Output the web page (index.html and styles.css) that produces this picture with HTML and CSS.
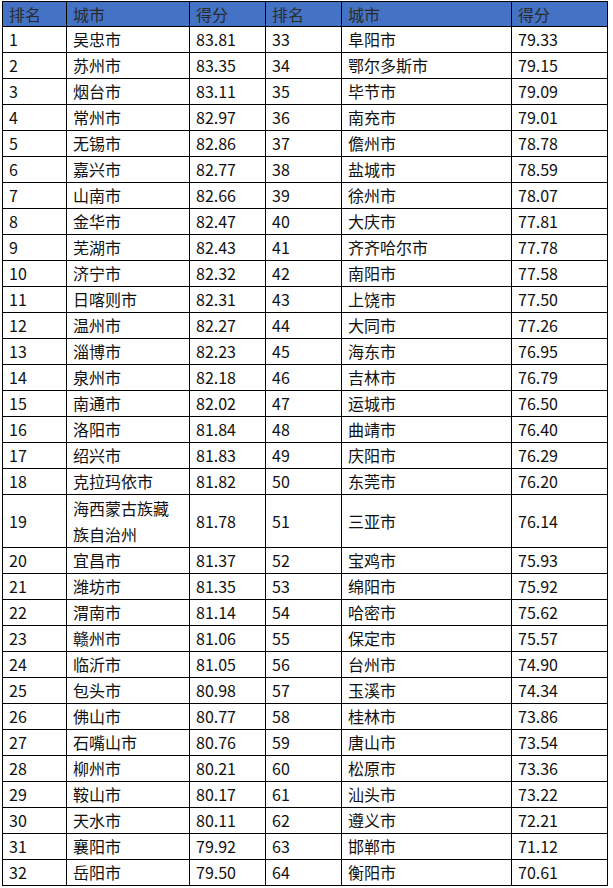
FILE: index.html
```html
<!DOCTYPE html>
<html lang="zh">
<head>
<meta charset="utf-8">
<title>城市排名</title>
<link rel="stylesheet" href="styles.css">
</head>
<body>
<table class="rank">
<colgroup>
<col class="c-rank"><col class="c-city"><col class="c-score">
<col class="c-rank2"><col class="c-city2"><col class="c-score2">
</colgroup>
<thead>
<tr><th>排名</th><th>城市</th><th>得分</th><th>排名</th><th>城市</th><th>得分</th></tr>
</thead>
<tbody>
<tr><td>1</td><td>吴忠市</td><td>83.81</td><td>33</td><td>阜阳市</td><td>79.33</td></tr>
<tr><td>2</td><td>苏州市</td><td>83.35</td><td>34</td><td>鄂尔多斯市</td><td>79.15</td></tr>
<tr><td>3</td><td>烟台市</td><td>83.11</td><td>35</td><td>毕节市</td><td>79.09</td></tr>
<tr><td>4</td><td>常州市</td><td>82.97</td><td>36</td><td>南充市</td><td>79.01</td></tr>
<tr><td>5</td><td>无锡市</td><td>82.86</td><td>37</td><td>儋州市</td><td>78.78</td></tr>
<tr><td>6</td><td>嘉兴市</td><td>82.77</td><td>38</td><td>盐城市</td><td>78.59</td></tr>
<tr><td>7</td><td>山南市</td><td>82.66</td><td>39</td><td>徐州市</td><td>78.07</td></tr>
<tr><td>8</td><td>金华市</td><td>82.47</td><td>40</td><td>大庆市</td><td>77.81</td></tr>
<tr><td>9</td><td>芜湖市</td><td>82.43</td><td>41</td><td>齐齐哈尔市</td><td>77.78</td></tr>
<tr><td>10</td><td>济宁市</td><td>82.32</td><td>42</td><td>南阳市</td><td>77.58</td></tr>
<tr><td>11</td><td>日喀则市</td><td>82.31</td><td>43</td><td>上饶市</td><td>77.50</td></tr>
<tr><td>12</td><td>温州市</td><td>82.27</td><td>44</td><td>大同市</td><td>77.26</td></tr>
<tr><td>13</td><td>淄博市</td><td>82.23</td><td>45</td><td>海东市</td><td>76.95</td></tr>
<tr><td>14</td><td>泉州市</td><td>82.18</td><td>46</td><td>吉林市</td><td>76.79</td></tr>
<tr><td>15</td><td>南通市</td><td>82.02</td><td>47</td><td>运城市</td><td>76.50</td></tr>
<tr><td>16</td><td>洛阳市</td><td>81.84</td><td>48</td><td>曲靖市</td><td>76.40</td></tr>
<tr><td>17</td><td>绍兴市</td><td>81.83</td><td>49</td><td>庆阳市</td><td>76.29</td></tr>
<tr><td>18</td><td>克拉玛依市</td><td>81.82</td><td>50</td><td>东莞市</td><td>76.20</td></tr>
<tr class="tall"><td>19</td><td>海西蒙古族藏<br>族自治州</td><td>81.78</td><td>51</td><td>三亚市</td><td>76.14</td></tr>
<tr><td>20</td><td>宜昌市</td><td>81.37</td><td>52</td><td>宝鸡市</td><td>75.93</td></tr>
<tr><td>21</td><td>潍坊市</td><td>81.35</td><td>53</td><td>绵阳市</td><td>75.92</td></tr>
<tr><td>22</td><td>渭南市</td><td>81.14</td><td>54</td><td>哈密市</td><td>75.62</td></tr>
<tr><td>23</td><td>赣州市</td><td>81.06</td><td>55</td><td>保定市</td><td>75.57</td></tr>
<tr><td>24</td><td>临沂市</td><td>81.05</td><td>56</td><td>台州市</td><td>74.90</td></tr>
<tr><td>25</td><td>包头市</td><td>80.98</td><td>57</td><td>玉溪市</td><td>74.34</td></tr>
<tr><td>26</td><td>佛山市</td><td>80.77</td><td>58</td><td>桂林市</td><td>73.86</td></tr>
<tr><td>27</td><td>石嘴山市</td><td>80.76</td><td>59</td><td>唐山市</td><td>73.54</td></tr>
<tr><td>28</td><td>柳州市</td><td>80.21</td><td>60</td><td>松原市</td><td>73.36</td></tr>
<tr><td>29</td><td>鞍山市</td><td>80.17</td><td>61</td><td>汕头市</td><td>73.22</td></tr>
<tr><td>30</td><td>天水市</td><td>80.11</td><td>62</td><td>遵义市</td><td>72.21</td></tr>
<tr><td>31</td><td>襄阳市</td><td>79.92</td><td>63</td><td>邯郸市</td><td>71.12</td></tr>
<tr><td>32</td><td>岳阳市</td><td>79.50</td><td>64</td><td>衡阳市</td><td>70.61</td></tr>
</tbody>
</table>
</body>
</html>
```
FILE: styles.css
```css
html, body {
  margin: 0;
  padding: 0;
  background: #ffffff;
}
body {
  padding: 1px 0 0 2px;
  font-family: "Noto Sans CJK SC", "Noto Sans", sans-serif;
  font-size: 16px;
  color: #111111;
}
.rank {
  border-collapse: collapse;
  table-layout: fixed;
  width: 606px;
}
.c-rank { width: 64px; }
.c-city { width: 123px; }
.c-score { width: 76px; }
.c-rank2 { width: 76px; }
.c-city2 { width: 170px; }
.c-score2 { width: 96px; }
.rank th,
.rank td {
  border: 1px solid #000000;
  padding: 0 6px;
  height: 25px;
  line-height: 25px;
  text-align: left;
  font-weight: normal;
  white-space: nowrap;
  overflow: hidden;
  vertical-align: middle;
}
.rank th {
  height: 24px;
  line-height: 24px;
  background: #4472c4;
  color: #2b2b2b;
}
.rank .tall td {
  height: 51px;
  line-height: 26px;
}
```
